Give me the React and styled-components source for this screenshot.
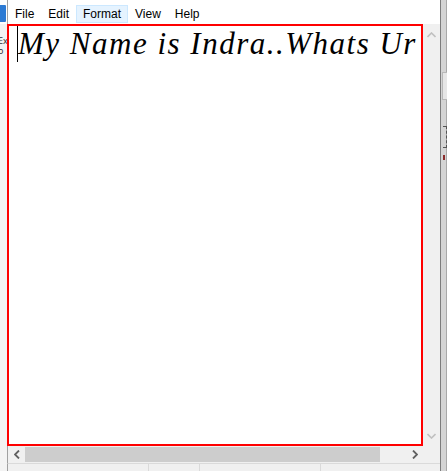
import React from 'react'
import styled, { createGlobalStyle } from 'styled-components'

const GlobalStyle = createGlobalStyle`
  html, body {
    margin: 0;
    padding: 0;
    background: #ffffff;
    overflow: hidden;
  }
`

const menuItems = ['File', 'Edit', 'Format', 'View', 'Help']

const App = () => {
  return (
    <>
      <GlobalStyle />
      <Screen>
        <LeftEdge>
          <AppIcon />
          <Peek>Ex</Peek>
          <Peek>o</Peek>
        </LeftEdge>
        <Window>
          <MenuBar>
            {menuItems.map((item) => (
              <MenuItem key={item} $active={item === 'Format'}>
                {item}
              </MenuItem>
            ))}
          </MenuBar>
          <Body>
            <Editor>
              <Caret />
              <Line>My Name is Indra..Whats Ur Name</Line>
            </Editor>
            <VScroll>
              <Arrow $dim>
                <svg width='9' height='6' viewBox='0 0 9 6'>
                  <path d='M0.5 5 L4.5 1 L8.5 5' fill='none' stroke='currentColor' strokeWidth='1.6' />
                </svg>
              </Arrow>
              <Arrow $dim>
                <svg width='9' height='6' viewBox='0 0 9 6'>
                  <path d='M0.5 1 L4.5 5 L8.5 1' fill='none' stroke='currentColor' strokeWidth='1.6' />
                </svg>
              </Arrow>
            </VScroll>
          </Body>
          <HScroll>
            <HArrow>
              <svg width='6' height='9' viewBox='0 0 6 9'>
                <path d='M5 0.5 L1 4.5 L5 8.5' fill='none' stroke='currentColor' strokeWidth='1.8' />
              </svg>
            </HArrow>
            <Thumb />
            <Track />
            <HArrow>
              <svg width='6' height='9' viewBox='0 0 6 9'>
                <path d='M1 0.5 L5 4.5 L1 8.5' fill='none' stroke='currentColor' strokeWidth='1.8' />
              </svg>
            </HArrow>
            <Corner />
          </HScroll>
          <StatusBar>
            <Cell $w={140} />
            <Cell $w={50} />
            <Cell $w={120} />
            <Cell $w={120} $last />
          </StatusBar>
        </Window>
        <RightEdge>
          <Frame />
          <Dots />
          <RedMark />
        </RightEdge>
      </Screen>
    </>
  )
}

export default App

const Screen = styled.div`
  display: flex;
  width: 447px;
  height: 471px;
  overflow: hidden;
`

const LeftEdge = styled.div`
  width: 7px;
  flex-shrink: 0;
  background: linear-gradient(#ffffff 0 24px, #f3f3f3 24px);
  display: flex;
  flex-direction: column;
  overflow: hidden;
`

const AppIcon = styled.div`
  width: 6px;
  height: 17px;
  margin-top: 5px;
  margin-bottom: 14px;
  background: #2d7bd4;
  border-radius: 0 1px 1px 0;
`

const Peek = styled.div`
  margin-left: -2px;
  font-family: 'Noto Sans', sans-serif;
  font-size: 9px;
  line-height: 10px;
  color: #333;
`

const Window = styled.div`
  width: 433px;
  flex-shrink: 0;
  display: flex;
  flex-direction: column;
  background: #ffffff;
`

const MenuBar = styled.div`
  height: 24px;
  display: flex;
  align-items: flex-end;
  padding-bottom: 1px;
  box-sizing: border-box;
  border-left: 1px solid #a0a0a0;
  font-family: 'Liberation Sans', Arial, sans-serif;
  font-size: 12px;
  color: #000;
`

const MenuItem = styled.div`
  height: 18px;
  line-height: 17px;
  padding: 0 6px;
  box-sizing: border-box;
  border: 1px solid ${(p) => (p.$active ? '#cce8ff' : 'transparent')};
  background: ${(p) => (p.$active ? '#e5f3ff' : 'transparent')};
`

const Body = styled.div`
  display: flex;
  height: 422px;
`

const Editor = styled.div`
  width: 416px;
  box-sizing: border-box;
  border: 2px solid #ff0000;
  padding: 0 0 0 8px;
  display: flex;
  align-items: flex-start;
  overflow: hidden;
  white-space: nowrap;
`

const Caret = styled.span`
  width: 1px;
  height: 36px;
  flex-shrink: 0;
  background: #000;
`

const Line = styled.span`
  font-family: 'Liberation Serif', serif;
  font-style: italic;
  font-size: 31px;
  letter-spacing: 1.5px;
  line-height: 36px;
  color: #000;
`

const VScroll = styled.div`
  width: 17px;
  background: #f0f0f0;
  display: flex;
  flex-direction: column;
  justify-content: space-between;
  padding: 5px 0 4px;
  box-sizing: border-box;
`

const Arrow = styled.div`
  height: 12px;
  display: flex;
  align-items: center;
  justify-content: center;
  color: ${(p) => (p.$dim ? '#c0c0c0' : '#606060')};
`

const HScroll = styled.div`
  height: 17px;
  display: flex;
  background: #f0f0f0;
  border-left: 1px solid #a0a0a0;
`

const HArrow = styled.div`
  width: 17px;
  display: flex;
  align-items: center;
  justify-content: center;
  color: #606060;
`

const Thumb = styled.div`
  width: 355px;
  margin: 1px 0;
  background: #cdcdcd;
`

const Track = styled.div`
  flex: 1;
`

const Corner = styled.div`
  width: 17px;
  background: #f0f0f0;
`

const StatusBar = styled.div`
  flex: 1;
  display: flex;
  background: #f0f0f0;
  border-top: 1px solid #dadada;
  border-left: 1px solid #a0a0a0;
`

const Cell = styled.div`
  width: ${(p) => p.$w}px;
  flex-shrink: 0;
  border-right: ${(p) => (p.$last ? 'none' : '1px solid #dadada')};
`

const RightEdge = styled.div`
  flex: 1;
  position: relative;
  background: #d4d4d4;
  border-left: 1px solid #7c7c7c;
  border-right: 1px solid #a8a8a8;
`

const Frame = styled.div`
  position: absolute;
  top: 72px;
  left: 1px;
  width: 4px;
  height: 26px;
  border: 1px solid #b8b8b8;
  background: #e6e6e6;
`

const Dots = styled.div`
  position: absolute;
  top: 126px;
  left: 2px;
  width: 3px;
  height: 20px;
  border: 1px dashed #555;
  border-left: none;
`

const RedMark = styled.div`
  position: absolute;
  top: 155px;
  left: 2px;
  width: 2px;
  height: 5px;
  background: #8a2a2a;
`
